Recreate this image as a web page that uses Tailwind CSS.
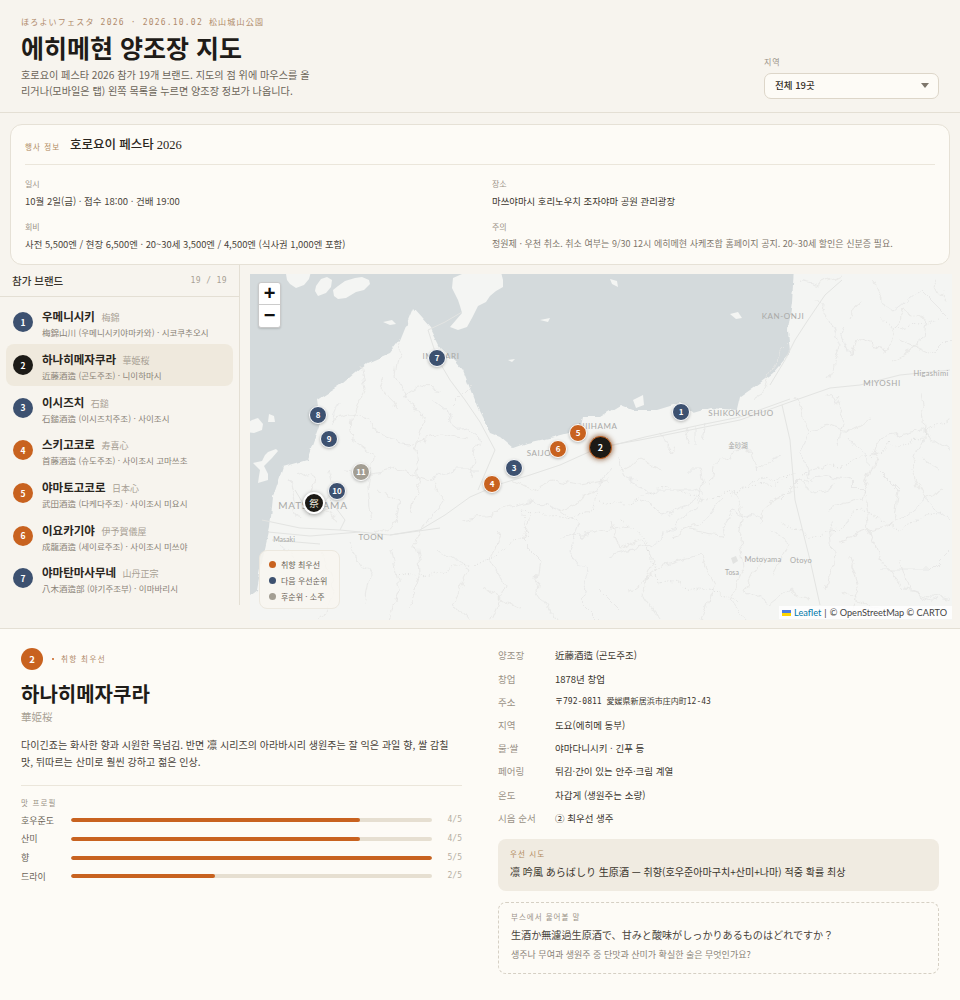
<!DOCTYPE html>
<html lang="ko">
<head>
    <meta charset="UTF-8">
    <meta name="viewport" content="width=device-width, initial-scale=1.0">
    <title>에히메현 양조장 지도</title>
    <script src="https://cdn.jsdelivr.net/npm/@tailwindcss/browser@4"></script>
</head>
<body class="bg-[#f7f4ee] text-[#2a2620] font-['Noto_Sans_CJK_KR','Noto_Sans_CJK_JP',sans-serif] w-[960px] h-[1000px] overflow-hidden">

    <!-- header -->
    <header class="h-[113px] border-b border-[#e4dfd4] pl-[21px] pr-[21px] flex justify-between">
        <div class="w-[295px]">
            <p class="mt-[17px] h-[12px] leading-[12px] text-[8px] tracking-[1.2px] text-[#b08a6a] font-['DejaVu_Sans_Mono','Noto_Sans_CJK_JP',monospace] whitespace-nowrap">ほろよいフェスタ 2026 · 2026.10.02 松山城山公園</p>
            <h1 class="mt-[2px] text-[25px] leading-[32px] font-bold text-[#1f1c18] whitespace-nowrap">에히메현 양조장 지도</h1>
            <p class="mt-[4px] text-[10.15px] leading-[16px] text-[#6b6459]">호로요이 페스타 2026 참가 19개 브랜드. 지도의 점 위에 마우스를 올리거나(모바일은 탭) 왼쪽 목록을 누르면 양조장 정보가 나옵니다.</p>
        </div>
        <div class="w-[175px] pt-[56px]">
            <p class="text-[8px] leading-[12px] tracking-[0.8px] text-[#9a9286]">지역</p>
            <div class="mt-[5px] h-[26px] rounded-[7px] border border-[#ddd6c9] bg-[#fdfbf6] pl-[10px] pr-[9px] pb-px flex items-center justify-between">
                <span class="text-[9.5px] font-medium text-[#332e28]">전체 19곳</span>
                <span class="w-0 h-0 border-l-[4px] border-r-[4px] border-t-[5px] border-l-transparent border-r-transparent border-t-[#7d766b]"></span>
            </div>
        </div>
    </header>

    <!-- event info -->
    <section class="mx-[10px] mt-[11px] h-[141px] rounded-[12px] border border-[#e6e1d6] bg-[#fdfbf6] px-[14px]">
        <div class="h-[40px] pt-[2px] border-b border-[#ebe6db] flex items-center">
            <span class="text-[7.5px] tracking-[1.1px] text-[#b08a5e] w-[45px] pt-[2px]">행사 정보</span>
            <span class="text-[12.5px] font-['Liberation_Serif','Noto_Sans_CJK_KR',serif] font-medium text-[#2a2620]">호로요이 페스타 2026</span>
        </div>
        <div class="grid grid-cols-[467px_1fr]">
            <div>
                <p class="mt-[13px] text-[8px] leading-[12px] text-[#9a9286]">일시</p>
                <p class="mt-[4px] text-[9.5px] leading-[14px] text-[#4a443b]">10월 2일(금) · 접수 18:00 · 건배 19:00</p>
                <p class="mt-[13px] text-[8px] leading-[12px] text-[#9a9286]">회비</p>
                <p class="mt-[4px] text-[9.4px] leading-[14px] text-[#4a443b] whitespace-nowrap">사전 5,500엔 / 현장 6,500엔 · 20~30세 3,500엔 / 4,500엔 (식사권 1,000엔 포함)</p>
            </div>
            <div>
                <p class="mt-[13px] text-[8px] leading-[12px] text-[#9a9286]">장소</p>
                <p class="mt-[4px] text-[9.4px] leading-[14px] text-[#3a352d]">마쓰야마시 호리노우치 조자야마 공원 관리광장</p>
                <p class="mt-[13px] text-[8px] leading-[12px] text-[#9a9286]">주의</p>
                <p class="mt-[4px] text-[9px] tracking-[0.02px] leading-[14px] text-[#7d766b] whitespace-nowrap">정원제 · 우천 취소. 취소 여부는 9/30 12시 에히메현 사케조합 홈페이지 공지. 20~30세 할인은 신분증 필요.</p>
            </div>
        </div>
    </section>

    <!-- brand list + map -->
    <section class="h-[364px] border-b border-[#e4dfd4] grid grid-cols-[240px_1fr]">
        <aside class="h-[340px] border-r border-[#e4dfd4] overflow-hidden">
            <div class="h-[32px] border-b border-[#e4dfd4] pl-[12px] pr-[12px] flex items-center justify-between">
                <span class="text-[10.5px] font-medium text-[#3a352d]">참가 브랜드</span>
                <span class="text-[8px] tracking-[0.4px] text-[#a8a195] font-['DejaVu_Sans_Mono',monospace]">19 / 19</span>
            </div>
            <ul class="mt-[4px] pl-[6px] pr-[6px] flex flex-col">
                <li class="h-[42.7px] rounded-[8px] pl-[7px] flex items-center gap-[9px]">
                    <span class="w-[20px] h-[20px] shrink-0 rounded-full bg-[#3d5170] text-white text-[8.5px] font-bold flex items-center justify-center">1</span>
                    <div class="min-w-0">
                        <p class="leading-[16px] whitespace-nowrap"><span class="text-[11.5px] font-bold text-[#2a2620]">우메니시키</span> <span class="ml-[2px] text-[9px] text-[#a8a195]">梅錦</span></p>
                        <p class="leading-[12px] text-[8.5px] text-[#8a8378] whitespace-nowrap">梅錦山川 (우메니시키야마카와) · 시코쿠추오시</p>
                    </div>
                </li>
                <li class="h-[42.7px] rounded-[8px] bg-[#efe9dd] pl-[7px] flex items-center gap-[9px]">
                    <span class="w-[20px] h-[20px] shrink-0 rounded-full bg-[#1c1a16] text-white text-[8.5px] font-bold flex items-center justify-center">2</span>
                    <div class="min-w-0">
                        <p class="leading-[16px] whitespace-nowrap"><span class="text-[11.5px] font-bold text-[#2a2620]">하나히메자쿠라</span> <span class="ml-[2px] text-[9px] text-[#a8a195]">華姫桜</span></p>
                        <p class="leading-[12px] text-[8.5px] text-[#8a8378] whitespace-nowrap">近藤酒造 (곤도주조) · 니이하마시</p>
                    </div>
                </li>
                <li class="h-[42.7px] rounded-[8px] pl-[7px] flex items-center gap-[9px]">
                    <span class="w-[20px] h-[20px] shrink-0 rounded-full bg-[#3d5170] text-white text-[8.5px] font-bold flex items-center justify-center">3</span>
                    <div class="min-w-0">
                        <p class="leading-[16px] whitespace-nowrap"><span class="text-[11.5px] font-bold text-[#2a2620]">이시즈치</span> <span class="ml-[2px] text-[9px] text-[#a8a195]">石鎚</span></p>
                        <p class="leading-[12px] text-[8.5px] text-[#8a8378] whitespace-nowrap">石鎚酒造 (이시즈치주조) · 사이조시</p>
                    </div>
                </li>
                <li class="h-[42.7px] rounded-[8px] pl-[7px] flex items-center gap-[9px]">
                    <span class="w-[20px] h-[20px] shrink-0 rounded-full bg-[#c8621f] text-white text-[8.5px] font-bold flex items-center justify-center">4</span>
                    <div class="min-w-0">
                        <p class="leading-[16px] whitespace-nowrap"><span class="text-[11.5px] font-bold text-[#2a2620]">스키고코로</span> <span class="ml-[2px] text-[9px] text-[#a8a195]">寿喜心</span></p>
                        <p class="leading-[12px] text-[8.5px] text-[#8a8378] whitespace-nowrap">首藤酒造 (슈도주조) · 사이조시 고마쓰초</p>
                    </div>
                </li>
                <li class="h-[42.7px] rounded-[8px] pl-[7px] flex items-center gap-[9px]">
                    <span class="w-[20px] h-[20px] shrink-0 rounded-full bg-[#c8621f] text-white text-[8.5px] font-bold flex items-center justify-center">5</span>
                    <div class="min-w-0">
                        <p class="leading-[16px] whitespace-nowrap"><span class="text-[11.5px] font-bold text-[#2a2620]">야마토고코로</span> <span class="ml-[2px] text-[9px] text-[#a8a195]">日本心</span></p>
                        <p class="leading-[12px] text-[8.5px] text-[#8a8378] whitespace-nowrap">武田酒造 (다케다주조) · 사이조시 미요시</p>
                    </div>
                </li>
                <li class="h-[42.7px] rounded-[8px] pl-[7px] flex items-center gap-[9px]">
                    <span class="w-[20px] h-[20px] shrink-0 rounded-full bg-[#c8621f] text-white text-[8.5px] font-bold flex items-center justify-center">6</span>
                    <div class="min-w-0">
                        <p class="leading-[16px] whitespace-nowrap"><span class="text-[11.5px] font-bold text-[#2a2620]">이요카기야</span> <span class="ml-[2px] text-[9px] text-[#a8a195]">伊予賀儀屋</span></p>
                        <p class="leading-[12px] text-[8.5px] text-[#8a8378] whitespace-nowrap">成龍酒造 (세이료주조) · 사이조시 미쓰야</p>
                    </div>
                </li>
                <li class="h-[42.7px] rounded-[8px] pl-[7px] flex items-center gap-[9px]">
                    <span class="w-[20px] h-[20px] shrink-0 rounded-full bg-[#3d5170] text-white text-[8.5px] font-bold flex items-center justify-center">7</span>
                    <div class="min-w-0">
                        <p class="leading-[16px] whitespace-nowrap"><span class="text-[11.5px] font-bold text-[#2a2620]">야마탄마사무네</span> <span class="ml-[2px] text-[9px] text-[#a8a195]">山丹正宗</span></p>
                        <p class="leading-[12px] text-[8.5px] text-[#8a8378] whitespace-nowrap">八木酒造部 (야기주조부) · 이마바리시</p>
                    </div>
                </li>
            </ul>
        </aside>

        <!-- map -->
        <div class="relative ml-[10px] mt-[9px] w-[702px] h-[346px] overflow-hidden bg-[#f4f5f3]">
            <svg class="absolute inset-0" width="702" height="346" viewBox="250 274 702 346" fill="none">
                <defs>
                    <filter id="wiggle" color-interpolation-filters="sRGB" filterUnits="userSpaceOnUse" x="230" y="254" width="742" height="386">
                        <feTurbulence type="fractalNoise" baseFrequency="0.06" numOctaves="3" seed="4"/>
                        <feDisplacementMap in="SourceGraphic" scale="14" xChannelSelector="R" yChannelSelector="G"/>
                    </filter>
                    <filter id="coast" color-interpolation-filters="sRGB" filterUnits="userSpaceOnUse" x="200" y="220" width="800" height="440">
                        <feTurbulence type="fractalNoise" baseFrequency="0.09" numOctaves="2" seed="9"/>
                        <feDisplacementMap in="SourceGraphic" scale="5" xChannelSelector="R" yChannelSelector="G"/>
                    </filter>
                </defs>
                <!-- sea -->
                <path filter="url(#coast)" fill="#d4dadc" d="M230 250H795L792 303 788 330 790 353 773 373 760 383 740 397 737 410 710 408 693 413 680 403 657 410 633 410 620 405 600 417 583 417 580 430 550 438 527 443 513 448 500 437 490 433 477 407 463 370 457 363 440 347 430 327 413 308 400 340 390 353 367 363 343 383 317 400 320 423 313 443 307 460 283 467 273 497 270 527 263 557 257 590 230 610Z"/>
                <!-- islands -->
                <g fill="#f4f5f3">
                    <path d="M333 290 338 286 345 281 355 278 362 277 369 280 370 284 364 290 356 292 346 298 338 299 334 296Z"/>
                    <path d="M316 286 321 279 327 277 332 280 331 287 326 293 318 296 315 291Z"/>
                    <path d="M285 268H312L309 279 304 285 296 288 290 284 287 280Z"/>
                    <path d="M453 278 462 274 470 268H500L503 280 503 287 496 291 490 296 486 302 478 306 472 318 467 327 458 330 450 327 456 320 462 313 460 306 458 300 455 294 452 288Z"/>
                    <path d="M246 424 252 420 258 418 263 424 262 430 254 433 246 432Z"/>
                    <path d="M269 414 274 416 275 422 268 422Z"/>
                    <path d="M253 463 262 461 265 455 268 452 276 449 278 451 272 458 264 466 268 474 268 480 258 483 259 476 260 470Z"/>
                    <path d="M383 322 392 320 396 324 390 325Z"/>
                    <path d="M730 314 738 312 742 318 736 319Z"/>
                    <path d="M633 400 643 395 644 405 636 408Z"/>
                    <path d="M610 279 617 281 618 287 612 284Z"/>
                    <path d="M540 320 550 318 548 322Z"/>
                    <path d="M442 366 450 361 448 366Z"/>
                    <path d="M508 360 515 359 512 362Z"/>
                </g>
                <!-- rivers -->
                <g stroke="#e4e5e3" stroke-width="0.8" stroke-linejoin="round" filter="url(#wiggle)">
                    <path d="M360 365 365 390 350 420 352 440 372 455 368 490 372 520"/>
                    <path d="M400 345 395 375 410 400 425 420 415 450 420 480 410 510"/>
                    <path d="M330 420 350 415 372 420 385 440 410 445 440 435 470 440"/>
                    <path d="M345 470 372 475 400 470 430 480 455 470 480 470"/>
                    <path d="M430 400 455 420 480 440 470 475"/>
                    <path d="M380 490 400 500 395 525 375 535"/>
                    <path d="M435 480 445 500 425 525 415 545 420 575 410 605"/>
                    <path d="M460 520 490 515 510 505 535 500 560 510 590 495 610 470"/>
                    <path d="M500 530 490 560 505 585 490 620"/>
                    <path d="M530 510 520 540 540 560 535 590 555 620"/>
                    <path d="M560 510 580 525 570 550 590 575 580 600 600 620"/>
                    <path d="M610 520 620 550 640 540 655 560 640 590 660 620"/>
                    <path d="M640 500 665 515 690 505 705 480 702 470 685 470"/>
                    <path d="M620 455 625 480 650 490 690 490 705 500"/>
                    <path d="M660 435 672 452 675 445M685 428 690 445M695 425 695 445M705 425 702 440"/>
                    <path d="M710 485 712 465 735 452 750 450 757 470 770 460 780 456"/>
                    <path d="M735 490 745 505 740 540 745 570 730 600 745 620"/>
                    <path d="M690 530 720 535 735 510 760 520 770 500 798 488"/>
                    <path d="M780 500 800 480 825 475 850 480 865 495 870 530 880 560 905 590 950 600"/>
                    <path d="M800 480 815 490 835 485M825 510 860 500"/>
                    <path d="M610 555 650 545 700 505"/>
                    <path d="M630 590 665 565 700 555 715 585 700 620"/>
                    <path d="M760 560 745 590 770 605 790 590 810 600"/>
                    <path d="M840 540 870 530 900 520 925 500 945 490"/>
                    <path d="M850 560 860 590 850 620M900 560 910 590 935 600"/>
                    <path d="M860 500 880 440 920 430 950 450"/>
                    <path d="M920 395 925 430 910 470 925 500 950 520"/>
                    <path d="M870 420 850 430 830 425 810 430 800 455 810 480"/>
                    <path d="M840 330 850 355 855 340 885 350 905 310 925 320 920 345 890 360"/>
                    <path d="M815 300 830 320 840 345 830 380"/>
                    <path d="M800 280 820 285 840 275M870 280 880 300 895 310 920 290 950 320"/>
                    <path d="M795 395 810 430M830 392 845 420 840 445"/>
                    <path d="M755 400 765 385 780 350 790 340"/>
                    <path d="M880 570 930 570 950 550M840 590 880 610"/>
                    <path d="M290 480 300 520M330 470 335 490 320 510 340 520"/>
                    <path d="M280 545 300 570 290 600M320 555 335 590 320 620"/>
                    <path d="M350 545 370 575 365 605M390 550 400 590 390 620"/>
                    <path d="M440 550 470 570 455 600 470 620"/>
                    <path d="M510 480 530 490 550 480 580 485 610 480"/>
                    <path d="M560 540 600 530 630 525M480 590 520 610M600 590 620 610"/>
                    <path d="M660 470 640 460 620 470M720 500 700 525 670 535"/>
                    <path d="M770 530 790 545 775 575M830 520 835 560 825 590"/>
                    <path d="M880 470 900 490 895 520M940 470 925 460M850 440 870 465"/>
                    <path d="M860 300 850 320M935 280 945 300M900 340 935 355 950 340"/>
                    <path d="M440 390 420 385 405 395M380 380 395 410M470 385 450 405"/>
                    <path d="M340 400 330 425M300 470 315 480 310 495"/>
                </g>
                <!-- boundaries -->
                <g stroke="#dcdddb" stroke-width="0.9" stroke-dasharray="1 2" filter="url(#wiggle)">
                    <path d="M395 575 440 570 490 560 525 535 520 510 570 520 590 510 595 490"/>
                    <path d="M600 500 625 505 665 485 700 500 740 490 780 480 810 470 860 460 910 440 950 420"/>
                    <path d="M730 495 760 480 790 475"/>
                    <path d="M880 320 900 330 940 320"/>
                    <path d="M620 520 640 530 660 580 700 590 740 600"/>
                    <path d="M780 520 820 540 860 510 900 530 940 510"/>
                </g>
                <!-- roads -->
                <g stroke="#e3e4e2" stroke-width="1" stroke-linejoin="round">
                    <path d="M390 535 420 530 445 515 470 497 500 484 530 475 560 465 600 447 640 440 700 428 740 420 790 402 830 388 860 385 900 375 950 370"/>
                    <path d="M610 446 645 437 700 425 740 417 790 399"/>
                    <path d="M437 358 450 380 465 400 480 422 495 450 478 490"/>
                    <path d="M782 405 790 440 795 500 810 560 820 605"/>
                    <path d="M262 520 300 528 340 530 390 535 440 528"/>
                    <path d="M268 532 310 536 360 532M272 540 320 544"/>
                    <path d="M437 358 428 330 445 322 462 312"/>
                    <path d="M770 385 785 360 795 340 808 320 825 295 842 280"/>
                    <path d="M330 500 345 520 340 530M295 490 310 515"/>
                </g>
                <path fill="#e2e3e1" d="M731 558 736 556 738 561 733 564Z"/>
                <!-- place labels -->
                <g fill="#a9a9a7" font-family="Lato, sans-serif" text-anchor="middle">
                    <text x="783" y="319" font-size="8" letter-spacing="0.6">KAN-ONJI</text>
                    <text x="882" y="386" font-size="8" letter-spacing="0.6">MIYOSHI</text>
                    <text x="931" y="376" font-size="7.5" letter-spacing="0.3">Higashimi</text>
                    <text x="741" y="416" font-size="8" letter-spacing="0.6">SHIKOKUCHUO</text>
                    <text x="598" y="429" font-size="8" letter-spacing="0.6">NIIHAMA</text>
                    <text x="539" y="456" font-size="8" letter-spacing="0.6">SAIJO</text>
                    <text x="441" y="359" font-size="8" letter-spacing="0.6">IMABARI</text>
                    <text x="313" y="509" font-size="10" letter-spacing="0.8">MATSUYAMA</text>
                    <text x="371" y="540" font-size="8" letter-spacing="0.4">TOON</text>
                    <text x="284" y="542" font-size="7">Masaki</text>
                    <text x="763" y="562" font-size="7.5" letter-spacing="0.2">Motoyama</text>
                    <text x="801" y="563" font-size="7.5" letter-spacing="0.2">Otoyo</text>
                    <text x="732" y="575" font-size="7">Tosa</text>
                    <text x="738" y="448" font-size="6.5" font-family="Noto Sans CJK JP, sans-serif">金砂湖</text>
                </g>
            </svg>

            <!-- markers -->
            <span class="absolute left-[422px] top-[129px] w-[18px] h-[18px] rounded-full border border-white bg-[#3d5170] text-white text-[8px] font-bold shadow-[0_1px_3px_rgba(0,0,0,0.25)] flex items-center justify-center">1</span>
            <span class="absolute left-[178px] top-[75px] w-[18px] h-[18px] rounded-full border border-white bg-[#3d5170] text-white text-[8px] font-bold shadow-[0_1px_3px_rgba(0,0,0,0.25)] flex items-center justify-center">7</span>
            <span class="absolute left-[59px] top-[132px] w-[18px] h-[18px] rounded-full border border-white bg-[#3d5170] text-white text-[8px] font-bold shadow-[0_1px_3px_rgba(0,0,0,0.25)] flex items-center justify-center">8</span>
            <span class="absolute left-[70px] top-[156px] w-[18px] h-[18px] rounded-full border border-white bg-[#3d5170] text-white text-[8px] font-bold shadow-[0_1px_3px_rgba(0,0,0,0.25)] flex items-center justify-center">9</span>
            <span class="absolute left-[78px] top-[208px] w-[18px] h-[18px] rounded-full border border-white bg-[#3d5170] text-white text-[8px] font-bold shadow-[0_1px_3px_rgba(0,0,0,0.25)] flex items-center justify-center">10</span>
            <span class="absolute left-[102px] top-[189px] w-[18px] h-[18px] rounded-full border border-white bg-[#a39e93] text-white text-[8px] font-bold shadow-[0_1px_3px_rgba(0,0,0,0.25)] flex items-center justify-center">11</span>
            <span class="absolute left-[255px] top-[185px] w-[18px] h-[18px] rounded-full border border-white bg-[#3d5170] text-white text-[8px] font-bold shadow-[0_1px_3px_rgba(0,0,0,0.25)] flex items-center justify-center">3</span>
            <span class="absolute left-[233px] top-[201px] w-[18px] h-[18px] rounded-full border border-white bg-[#c8621f] text-white text-[8px] font-bold shadow-[0_1px_3px_rgba(0,0,0,0.25)] flex items-center justify-center">4</span>
            <span class="absolute left-[319px] top-[150px] w-[18px] h-[18px] rounded-full border border-white bg-[#c8621f] text-white text-[8px] font-bold shadow-[0_1px_3px_rgba(0,0,0,0.25)] flex items-center justify-center">5</span>
            <span class="absolute left-[299px] top-[166px] w-[18px] h-[18px] rounded-full border border-white bg-[#c8621f] text-white text-[8px] font-bold shadow-[0_1px_3px_rgba(0,0,0,0.25)] flex items-center justify-center">6</span>
            <span class="absolute left-[339px] top-[162px] w-[23px] h-[23px] rounded-full border border-[#c8621f] bg-[#1c1a16] text-white text-[9px] font-bold shadow-[0_0_5px_1px_rgba(120,60,20,0.65)] flex items-center justify-center">2</span>
            <span class="absolute left-[53px] top-[218px] w-[22px] h-[22px] rounded-full border-2 border-white bg-[#1c1a16] text-[#e8e4da] text-[9.5px] shadow-[0_1px_4px_rgba(0,0,0,0.35)] flex items-center justify-center">祭</span>

            <!-- zoom control -->
            <div class="absolute left-[8px] top-[8px] w-[23px] rounded-[3px] border border-[#c9c9c9] bg-white shadow-[0_1px_2px_rgba(0,0,0,0.15)] text-[#111] font-['Liberation_Sans',sans-serif] font-bold">
                <div class="h-[22px] border-b border-[#ccc] text-[20px] leading-[21px] text-center">+</div>
                <div class="h-[22px] text-[20px] leading-[21px] text-center">−</div>
            </div>

            <!-- legend -->
            <div class="absolute left-[9px] top-[276px] w-[81px] h-[59px] rounded-[8px] border border-[#ece8df] bg-[#f8f6f0]/85 pl-[9px] pt-[7px] flex flex-col gap-[3px]">
                <div class="h-[13px] flex items-center gap-[5px] text-[8px] text-[#6b6459]"><span class="w-[7px] h-[7px] rounded-full bg-[#c8621f]"></span>취향 최우선</div>
                <div class="h-[13px] flex items-center gap-[5px] text-[8px] text-[#6b6459]"><span class="w-[7px] h-[7px] rounded-full bg-[#3d5170]"></span>다음 우선순위</div>
                <div class="h-[13px] flex items-center gap-[5px] text-[8px] text-[#6b6459]"><span class="w-[7px] h-[7px] rounded-full bg-[#a39e93]"></span>후순위 · 소주</div>
            </div>

            <!-- attribution -->
            <div class="absolute right-0 bottom-[1px] h-[13px] pl-[3px] pr-[5px] bg-white/80 text-[9.2px] leading-[13px] text-[#444] font-['Lato',sans-serif] whitespace-nowrap flex items-center">
                <svg class="mr-[3px]" width="9" height="6" viewBox="0 0 12 8"><rect width="12" height="4" fill="#4c7be1"/><rect y="4" width="12" height="4" fill="#ffd500"/></svg>
                <span class="text-[#0078a8]">Leaflet</span><span class="mx-[3px]">|</span>© OpenStreetMap © CARTO
            </div>
        </div>
    </section>

    <!-- selected brewery -->
    <section class="h-[372px] bg-[#fdfbf6] pl-[21px] pr-[21px] grid grid-cols-[441px_441px] gap-x-[36px]">
        <div>
            <div class="mt-[19px] flex items-center">
                <span class="w-[22px] h-[22px] rounded-full bg-[#c8621f] text-white text-[9.5px] font-bold flex items-center justify-center">2</span>
                <span class="ml-[9px] w-[2px] h-[2px] rounded-full bg-[#c8621f]"></span>
                <span class="ml-[7px] text-[7.5px] tracking-[1.4px] text-[#b08a6a]">취향 최우선</span>
            </div>
            <h2 class="mt-[9px] text-[20px] leading-[30px] font-bold text-[#1f1c18]">하나히메자쿠라</h2>
            <p class="text-[10.5px] leading-[16px] text-[#a8a195]">華姫桜</p>
            <p class="mt-[11px] max-w-[438px] text-[10.05px] leading-[17px] text-[#4a443b]">다이긴죠는 화사한 향과 시원한 목넘김. 반면 凛 시리즈의 아라바시리 생원주는 잘 익은 과일 향, 쌀 감칠맛, 뒤따르는 산미로 훨씬 강하고 젊은 인상.</p>
            <div class="mt-[15px] border-t border-[#ebe6db] pt-[11px]">
                <p class="text-[7.5px] leading-[12px] tracking-[1.2px] text-[#9a9286]">맛 프로필</p>
                <div class="mt-[2px] flex flex-col">
                    <div class="h-[18.7px] grid grid-cols-[50px_361px_1fr] items-center text-[9px] text-[#6b6459]">
                        <span>호우준도</span>
                        <div class="h-[4px] rounded-full bg-[#e6dfd1] overflow-hidden"><div class="h-full w-4/5 rounded-full bg-[#c8621f]"></div></div>
                        <span class="text-right text-[8px] text-[#b5aea2] font-['DejaVu_Sans_Mono',monospace]">4/5</span>
                    </div>
                    <div class="h-[18.7px] grid grid-cols-[50px_361px_1fr] items-center text-[9px] text-[#6b6459]">
                        <span>산미</span>
                        <div class="h-[4px] rounded-full bg-[#e6dfd1] overflow-hidden"><div class="h-full w-4/5 rounded-full bg-[#c8621f]"></div></div>
                        <span class="text-right text-[8px] text-[#b5aea2] font-['DejaVu_Sans_Mono',monospace]">4/5</span>
                    </div>
                    <div class="h-[18.7px] grid grid-cols-[50px_361px_1fr] items-center text-[9px] text-[#6b6459]">
                        <span>향</span>
                        <div class="h-[4px] rounded-full bg-[#e6dfd1] overflow-hidden"><div class="h-full w-full rounded-full bg-[#c8621f]"></div></div>
                        <span class="text-right text-[8px] text-[#b5aea2] font-['DejaVu_Sans_Mono',monospace]">5/5</span>
                    </div>
                    <div class="h-[18.7px] grid grid-cols-[50px_361px_1fr] items-center text-[9px] text-[#6b6459]">
                        <span>드라이</span>
                        <div class="h-[4px] rounded-full bg-[#e6dfd1] overflow-hidden"><div class="h-full w-2/5 rounded-full bg-[#c8621f]"></div></div>
                        <span class="text-right text-[8px] text-[#b5aea2] font-['DejaVu_Sans_Mono',monospace]">2/5</span>
                    </div>
                </div>
            </div>
        </div>
        <div>
            <dl class="mt-[15px] grid grid-cols-[57px_1fr] auto-rows-[23.2px] items-center text-[9.5px]">
                <dt class="text-[#9a9286]">양조장</dt><dd class="text-[#3a352d]">近藤酒造 (곤도주조)</dd>
                <dt class="text-[#9a9286]">창업</dt><dd class="text-[#3a352d]">1878년 창업</dd>
                <dt class="text-[#9a9286]">주소</dt><dd class="text-[8px] tracking-[0.02px] text-[#3a352d] font-['DejaVu_Sans_Mono','Noto_Sans_CJK_JP',monospace]">〒792-0811 愛媛県新居浜市庄内町12-43</dd>
                <dt class="text-[#9a9286]">지역</dt><dd class="text-[#3a352d]">도요(에히메 동부)</dd>
                <dt class="text-[#9a9286]">물·쌀</dt><dd class="text-[#3a352d]">야마다니시키 · 긴푸 등</dd>
                <dt class="text-[#9a9286]">페어링</dt><dd class="text-[#3a352d]">튀김·간이 있는 안주·크림 계열</dd>
                <dt class="text-[#9a9286]">온도</dt><dd class="text-[#3a352d]">차갑게 (생원주는 소량)</dd>
                <dt class="text-[#9a9286]">시음 순서</dt><dd class="text-[#3a352d]">② 최우선 생주</dd>
            </dl>
            <div class="mt-[9px] h-[52px] rounded-[8px] bg-[#f0ebe1] pl-[12px] pr-[12px] pt-[9px]">
                <p class="text-[7.5px] leading-[11px] tracking-[1.1px] text-[#b08a5e]">우선 시도</p>
                <p class="mt-[5px] text-[10.05px] leading-[16px] text-[#3a352d] whitespace-nowrap">凛 吟風 あらばしり 生原酒 — 취향(호우준아마구치+산미+나마) 적중 확률 최상</p>
            </div>
            <div class="mt-[11px] h-[72px] rounded-[8px] border border-dashed border-[#d6d0c4] pl-[12px] pr-[12px] pt-[8px]">
                <p class="text-[7.5px] leading-[11px] tracking-[1px] text-[#9a9286]">부스에서 물어볼 말</p>
                <p class="mt-[5px] text-[10.1px] leading-[16px] text-[#4a443b] whitespace-nowrap">生酒か無濾過生原酒で、甘みと酸味がしっかりあるものはどれですか？</p>
                <p class="mt-[5px] text-[9px] leading-[14px] text-[#8a8378]">생주나 무여과 생원주 중 단맛과 산미가 확실한 술은 무엇인가요?</p>
            </div>
        </div>
    </section>
</body>
</html>
